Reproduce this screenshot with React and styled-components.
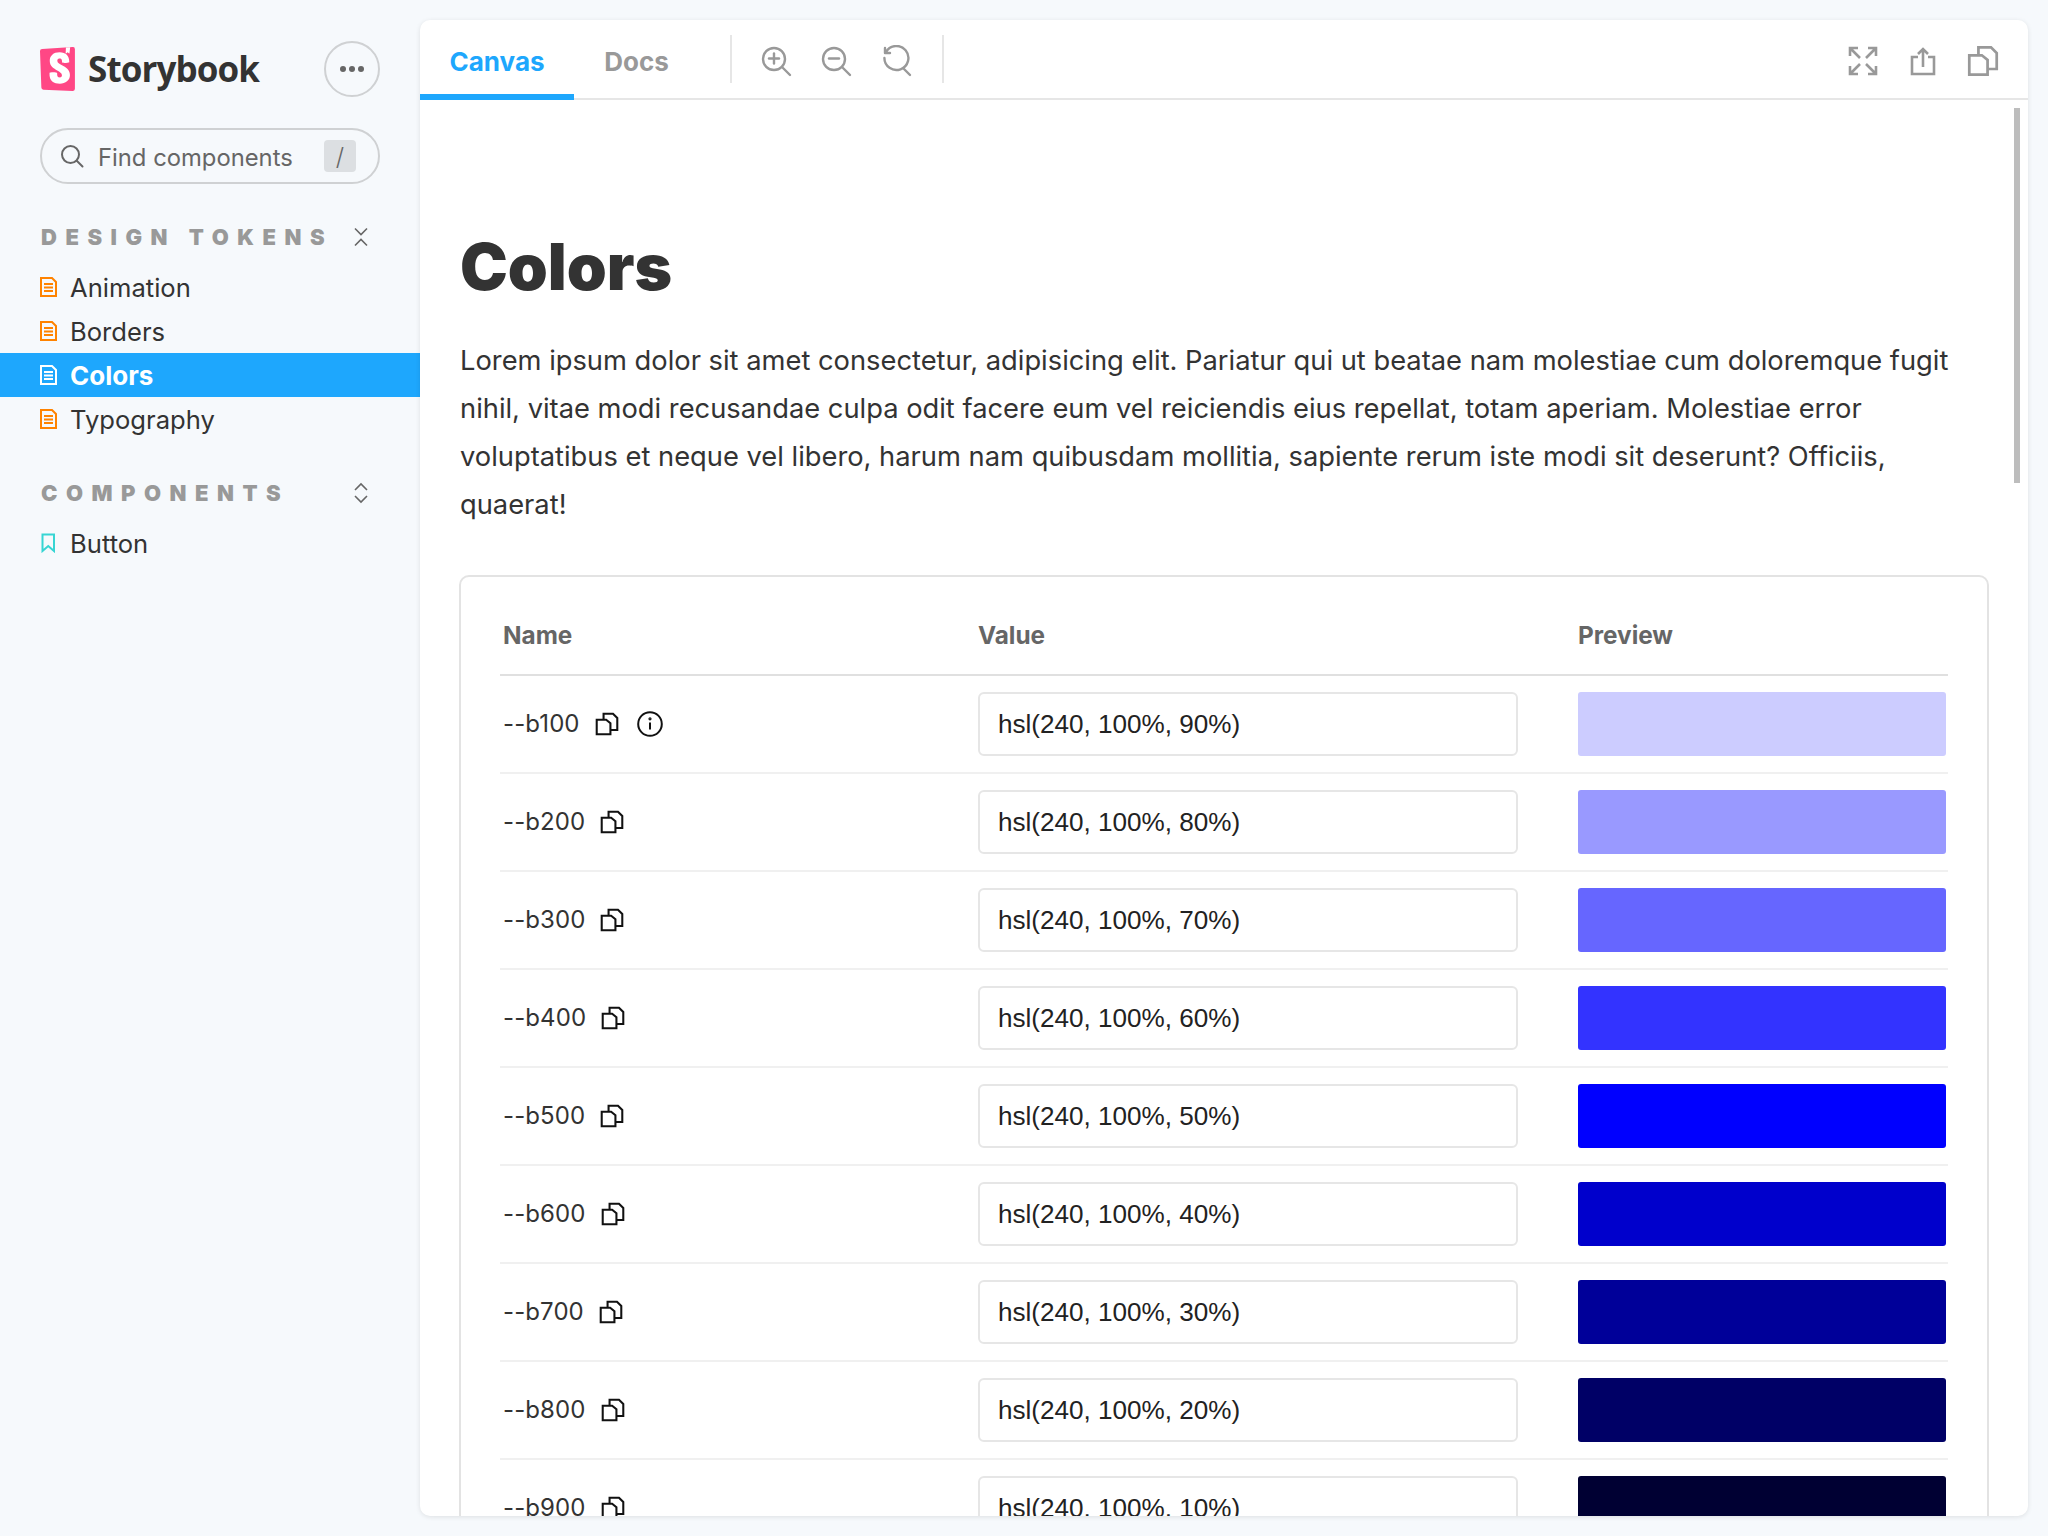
import styled, { createGlobalStyle } from "styled-components";

const GlobalStyle = createGlobalStyle`
	html, body {
		margin: 0;
		padding: 0;
		background: #f6f9fc;
	}
	* {
		box-sizing: border-box;
	}
`;

const Page = styled.div`
	display: flex;
	width: 2048px;
	height: 1536px;
	overflow: hidden;
	background: #f6f9fc;
	font-family: Inter, "Liberation Sans", sans-serif;
	color: #333;
`;

const Sidebar = styled.aside`
	width: 420px;
	flex-shrink: 0;
	padding-top: 41px;
`;

const BrandRow = styled.div`
	display: flex;
	align-items: center;
	justify-content: space-between;
	padding: 0 40px;
	height: 56px;
`;

const Brand = styled.div`
	display: flex;
	align-items: center;
	gap: 13px;
`;

const BrandName = styled.span`
	font-family: "Open Sans", sans-serif;
	font-size: 35px;
	font-weight: 700;
	letter-spacing: -0.9px;
	color: #333;
	margin-top: -2px;
`;

const MenuButton = styled.button`
	width: 56px;
	height: 56px;
	display: flex;
	align-items: center;
	justify-content: center;
	gap: 3px;
	padding: 0;
	border: 2px solid #cfd1d3;
	border-radius: 50%;
	background: transparent;
`;

const Dot = styled.i`
	width: 6px;
	height: 6px;
	border-radius: 50%;
	background: #666;
`;

const Search = styled.div`
	display: flex;
	align-items: center;
	height: 56px;
	margin: 31px 40px 0;
	padding: 0 22px 0 18px;
	border: 2px solid #cfd1d3;
	border-radius: 28px;
	color: #666;
	font-size: 23.8px;
`;

const SearchText = styled.span`
	flex: 1;
	margin-left: 14px;
	padding-top: 2px;
`;

const KeyHint = styled.span`
	width: 32px;
	height: 32px;
	display: flex;
	align-items: center;
	justify-content: center;
	border-radius: 4px;
	background: #dcdfe2;
	font-size: 24px;
	font-weight: 300;
`;

const SectionHead = styled.div`
	display: flex;
	align-items: center;
	justify-content: space-between;
	height: 44px;
	padding: 0 52px 0 41px;
	margin-top: ${(p) => p.$top}px;
	margin-bottom: 6px;
`;

const SectionTitle = styled.span`
	font-size: 22px;
	font-weight: 900;
	letter-spacing: 8.5px;
	text-transform: uppercase;
	color: #999;
`;

const NavItem = styled.div`
	display: flex;
	align-items: center;
	height: 44px;
	gap: 13px;
	padding-left: 40px;
	font-size: ${(p) => (p.$active ? 26 : 25.6)}px;
	font-weight: ${(p) => (p.$active ? 700 : 400)};
	color: ${(p) => (p.$active ? "#fff" : "#333")};
	background: ${(p) => (p.$active ? "#1ea7fd" : "transparent")};
`;

const Panel = styled.main`
	position: relative;
	flex: 1;
	margin: 20px 20px 20px 0;
	display: flex;
	flex-direction: column;
	overflow: hidden;
	background: #fff;
	border-radius: 10px;
	box-shadow: 0 1px 5px rgba(0, 0, 0, 0.1);
`;

const Toolbar = styled.header`
	display: flex;
	align-items: center;
	height: 80px;
	flex-shrink: 0;
	border-bottom: 2px solid #e6e6e6;
`;

const Tab = styled.div`
	display: flex;
	align-items: center;
	justify-content: center;
	width: ${(p) => p.$w}px;
	height: 80px;
	margin-bottom: -2px;
	font-size: 26px;
	font-weight: 700;
	color: ${(p) => (p.$active ? "#1ea7fd" : "#999")};
	border-bottom: 6px solid ${(p) => (p.$active ? "#1ea7fd" : "transparent")};
	padding-top: 8px;
`;

const Divider = styled.span`
	width: 2px;
	height: 48px;
	background: #e6e6e6;
	margin: ${(p) => p.$margin};
`;

const ToolIcons = styled.div`
	display: flex;
	align-items: center;
	gap: 28px;
	margin-top: 4px;
	margin-left: ${(p) => (p.$end ? "auto" : "0")};
	margin-right: ${(p) => (p.$end ? "29px" : "0")};
`;

const Scroller = styled.div`
	flex: 1;
	overflow: hidden;
	padding: 131px 39px 0 40px;
`;

const ScrollThumb = styled.div`
	position: absolute;
	top: 88px;
	right: 8px;
	width: 6px;
	height: 375px;
	background: #bdbdbd;
`;

const Title = styled.h1`
	margin: 0 0 34px;
	font-size: 64px;
	line-height: 72px;
	font-weight: 900;
	color: #333;
`;

const Lead = styled.p`
	margin: 0 0 46px;
	font-size: 27.3px;
	line-height: 48px;
	color: #333;
`;

const Card = styled.section`
	margin-left: -1px;
	border: 2px solid #e3e3e3;
	border-radius: 10px;
	padding: 0 39px 0 39px;
`;

const Row = styled.div`
	display: grid;
	grid-template-columns: 478px 600px 1fr;
	align-items: center;
	height: ${(p) => (p.$head ? 99 : 98)}px;
	padding-top: ${(p) => (p.$head ? 18 : 0)}px;
	border-bottom: 2px solid ${(p) => (p.$head ? "#e0e0e0" : "#f0f0f0")};
`;

const HeadCell = styled.div`
	font-size: 24.3px;
	font-weight: 700;
	color: #666;
	padding-left: ${(p) => p.$pad || 0}px;
`;

const NameCell = styled.div`
	display: flex;
	align-items: center;
	padding-left: 3px;
	margin-top: -1px;
	font-size: 24px;
	color: #333;
	letter-spacing: 0.1px;
`;

const CopyWrap = styled.span`
	display: flex;
	margin-left: 15px;
`;

const InfoWrap = styled.span`
	display: flex;
	margin-left: 18px;
`;

const ValueBox = styled.div`
	display: flex;
	align-items: center;
	width: 540px;
	height: 64px;
	padding-left: 18px;
	border: 2px solid #e6e6e6;
	border-radius: 6px;
	font-family: "Liberation Sans", Arial, sans-serif;
	font-size: 26.1px;
	color: #222;
`;

const Swatch = styled.div`
	width: 368px;
	height: 64px;
	border-radius: 3px;
`;

const stroke = {
	fill: "none",
	stroke: "currentColor",
	strokeWidth: 2,
	strokeLinecap: "round",
	strokeLinejoin: "round",
};

function Logo() {
	return (
		<svg width="35" height="44" viewBox="0 0 16.1 20" preserveAspectRatio="none">
			<path d="M.62 18.43 0 1.92A1 1 0 0 1 .97.88L15 0a1 1 0 0 1 1.06 1v18a1 1 0 0 1-1.05 1L1.58 19.39a1 1 0 0 1-.96-.96Z" fill="#ff4785" />
			<path
				fillRule="evenodd"
				d="m13.88.09-1.95.14-.13 2.66a.1.1 0 0 0 .16.08l.77-.58.66.52a.1.1 0 0 0 .16-.08L13.88.1Zm-.4 6.8c-.4.31-3.32.52-3.32.08.07-1.7-.7-1.77-1.13-1.77-.4 0-1.07.12-1.07 1.03 0 .93 1 1.45 2.16 2.05 1.65.85 3.65 1.88 3.65 4.48 0 2.5-2.03 3.89-4.63 3.89-2.68 0-5.02-1.09-4.75-4.84.1-.44 3.5-.34 3.5 0-.04 1.55.31 2 1.2 2 .68 0 1-.37 1-1 0-.96-1.01-1.52-2.18-2.17-1.57-.88-3.42-1.9-3.42-4.27 0-2.36 1.62-3.93 4.53-3.93 2.9 0 4.46 1.55 4.46 4.47Z"
				fill="#fff"
			/>
		</svg>
	);
}

function SearchIcon() {
	return (
		<svg width="24" height="24" viewBox="0 0 24 24" {...stroke}>
			<circle cx="10.5" cy="10.5" r="8.5" />
			<path d="M17 17l5.5 5.5" />
		</svg>
	);
}

function DocIcon({ color }) {
	return (
		<svg width="17" height="20" viewBox="0 0 17 20" fill="none" stroke={color} strokeWidth="2">
			<path d="M1 1h11l4 4v14H1z" />
			<path d="M4 7h9M4 10.5h9M4 14h9" />
		</svg>
	);
}

function BookmarkIcon() {
	return (
		<svg width="17" height="20" viewBox="0 0 17 20" fill="none" stroke="#37d5d3" strokeWidth="2">
			<path d="M2.5 1.5h11.5v16.5l-5.75-5-5.75 5z" />
		</svg>
	);
}

function CollapseIcon() {
	return (
		<svg width="14" height="20" viewBox="0 0 14 20" fill="none" stroke="#666" strokeWidth="1.6">
			<path d="M1 1.5l6 6 6-6M1 18.5l6-6 6 6" />
		</svg>
	);
}

function ExpandIcon() {
	return (
		<svg width="14" height="22" viewBox="0 0 14 22" fill="none" stroke="#666" strokeWidth="1.6">
			<path d="M1 8l6-6 6 6M1 14l6 6 6-6" />
		</svg>
	);
}

function ZoomIcon({ kind }) {
	return (
		<svg width="32" height="32" viewBox="0 0 32 32" {...stroke} stroke="#999" strokeWidth="2.4">
			{kind === "reset" ? (
				<path d="M6 7a12 12 0 1 1-1.6 6M5 3v5h5" />
			) : (
				<circle cx="14" cy="14" r="11" />
			)}
			<path d="M23 23l7 7" />
			{kind !== "reset" && <path d="M9 13.5h10" />}
			{kind === "in" && <path d="M14 8.5v10" />}
		</svg>
	);
}

function FullscreenIcon() {
	return (
		<svg width="32" height="32" viewBox="0 0 32 32" fill="none" stroke="#999" strokeWidth="2.6">
			<path d="M3 11V3h8M3 3l10 10M21 3h8v8M29 3L19 13M3 21v8h8M3 29l10-10M21 29h8v-8M29 29L19 19" />
		</svg>
	);
}

function ShareIcon() {
	return (
		<svg width="32" height="32" viewBox="0 0 32 32" fill="none" stroke="#999" strokeWidth="2.6">
			<path d="M11 12H5v17h22V12h-6M16 22V4M11 9l5-5 5 5" />
		</svg>
	);
}

function CopyIcon({ size = 28, color = "#999", weight = 2.4 }) {
	return (
		<svg width={size} height={size} viewBox="0 0 28 28" fill="none" stroke={color} strokeWidth={weight}>
			<path d="M2 9h11l5 4v13H2z" />
			<path d="M10 9V2h11l5 5v14h-8" />
		</svg>
	);
}

function InfoIcon() {
	return (
		<svg width="26" height="26" viewBox="0 0 26 26" fill="none" stroke="#111" strokeWidth="2">
			<circle cx="13" cy="13" r="11.8" />
			<path d="M13 11.5v7" />
			<circle cx="13" cy="7.8" r="0.6" />
		</svg>
	);
}

const tokens = [
	["--b100", "hsl(240, 100%, 90%)"],
	["--b200", "hsl(240, 100%, 80%)"],
	["--b300", "hsl(240, 100%, 70%)"],
	["--b400", "hsl(240, 100%, 60%)"],
	["--b500", "hsl(240, 100%, 50%)"],
	["--b600", "hsl(240, 100%, 40%)"],
	["--b700", "hsl(240, 100%, 30%)"],
	["--b800", "hsl(240, 100%, 20%)"],
	["--b900", "hsl(240, 100%, 10%)"],
];

const navItems = ["Animation", "Borders", "Colors", "Typography"];

export default function App() {
	return (
		<>
			<GlobalStyle />
			<Page>
				<Sidebar>
					<BrandRow>
						<Brand>
							<Logo />
							<BrandName>Storybook</BrandName>
						</Brand>
						<MenuButton>
							<Dot />
							<Dot />
							<Dot />
						</MenuButton>
					</BrandRow>
					<Search>
						<SearchIcon />
						<SearchText>Find components</SearchText>
						<KeyHint>/</KeyHint>
					</Search>
					<SectionHead $top={31}>
						<SectionTitle>Design tokens</SectionTitle>
						<CollapseIcon />
					</SectionHead>
					{navItems.map((name) => (
						<NavItem key={name} $active={name === "Colors"}>
							<DocIcon color={name === "Colors" ? "#fff" : "#ff8300"} />
							{name}
						</NavItem>
					))}
					<SectionHead $top={30}>
						<SectionTitle>Components</SectionTitle>
						<ExpandIcon />
					</SectionHead>
					<NavItem>
						<BookmarkIcon />
						Button
					</NavItem>
				</Sidebar>
				<Panel>
					<Toolbar>
						<Tab $w={154} $active>
							Canvas
						</Tab>
						<Tab $w={125}>Docs</Tab>
						<Divider $margin="0 28px 0 31px" />
						<ToolIcons>
							<ZoomIcon kind="in" />
							<ZoomIcon kind="out" />
							<ZoomIcon kind="reset" />
						</ToolIcons>
						<Divider $margin="0 0 0 30px" />
						<ToolIcons $end>
							<FullscreenIcon />
							<ShareIcon />
							<CopyIcon size={32} />
						</ToolIcons>
					</Toolbar>
					<Scroller>
						<Title>Colors</Title>
						<Lead>
							Lorem ipsum dolor sit amet consectetur, adipisicing elit. Pariatur qui ut beatae nam molestiae cum
							doloremque fugit nihil, vitae modi recusandae culpa odit facere eum vel reiciendis eius repellat, totam
							aperiam. Molestiae error voluptatibus et neque vel libero, harum nam quibusdam mollitia, sapiente rerum
							iste modi sit deserunt? Officiis, quaerat!
						</Lead>
						<Card>
							<Row $head>
								<HeadCell $pad={3}>Name</HeadCell>
								<HeadCell>Value</HeadCell>
								<HeadCell>Preview</HeadCell>
							</Row>
							{tokens.map(([name, value], i) => (
								<Row key={name}>
									<NameCell>
										{name}
										<CopyWrap>
											<CopyIcon size={24} color="#111" weight={2.4} />
										</CopyWrap>
										{i === 0 && (
											<InfoWrap>
												<InfoIcon />
											</InfoWrap>
										)}
									</NameCell>
									<ValueBox>{value}</ValueBox>
									<Swatch style={{ background: value }} />
								</Row>
							))}
						</Card>
					</Scroller>
					<ScrollThumb />
				</Panel>
			</Page>
		</>
	);
}
